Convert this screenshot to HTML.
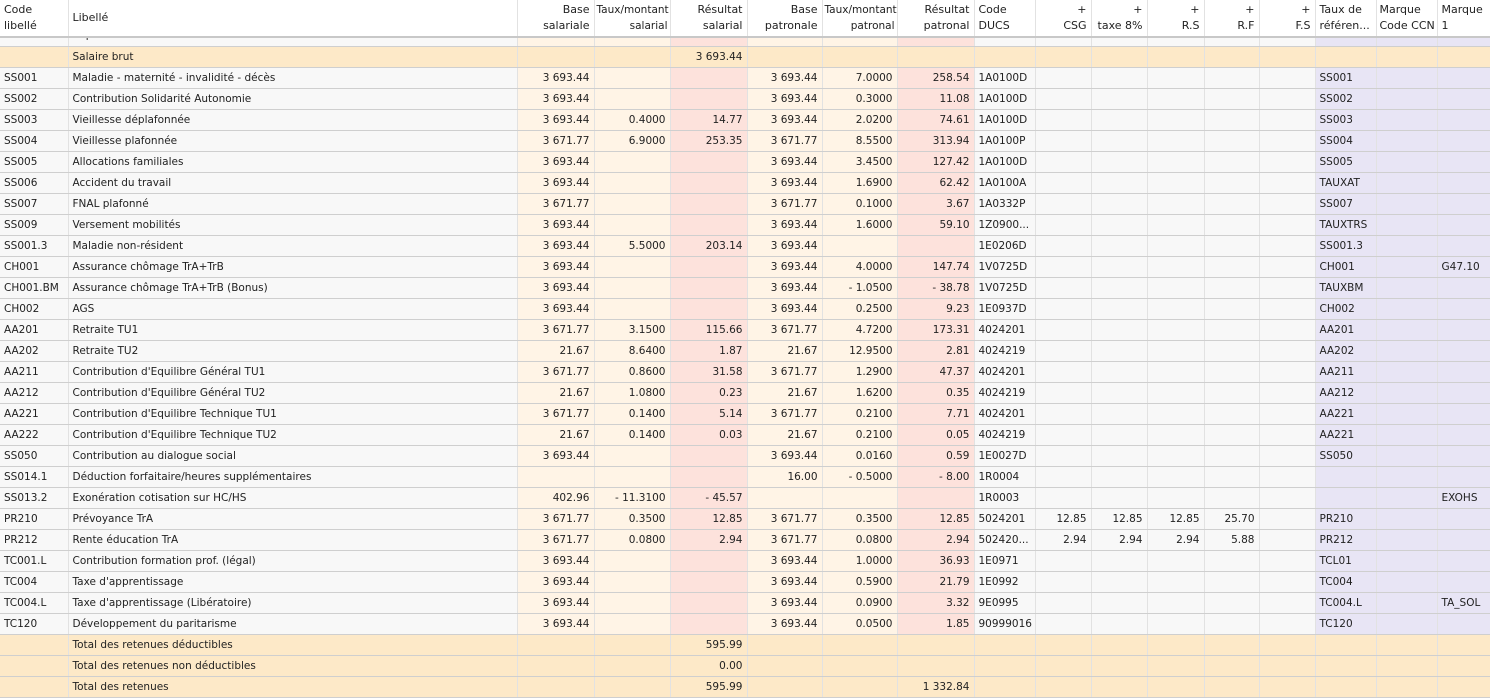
<!DOCTYPE html>
<html><head><meta charset="utf-8"><style>
*{margin:0;padding:0;box-sizing:border-box}
body{width:1490px;height:691px;overflow:hidden;background:#fff;font-family:"DejaVu Sans","Liberation Sans",sans-serif;font-size:10.5px;color:#222;position:relative}
table{border-collapse:collapse;table-layout:fixed;width:1490px;position:absolute;left:0}
td{height:21px;border-bottom:1px solid #cfcfcf;border-right:1px solid #e2e2e2;padding:0 4px;white-space:nowrap;overflow:hidden;background:#f8f8f8}
td.r{text-align:right}
.o{background:#fff4e6}.p{background:#fde2dc}.l{background:#e8e5f5}
tr.t td{background:#fde9c8}
#hd{top:0;z-index:2;background:#fff}
#hd td{height:37px;max-height:37px;background:#fff;border-bottom:2px solid #c8c8c8;vertical-align:middle;line-height:16px;white-space:nowrap;font-size:11px}
#bd{top:25px}
</style></head><body>
<table id="hd"><colgroup><col style="width:68px"><col style="width:449px"><col style="width:77px"><col style="width:76px"><col style="width:77px"><col style="width:75px"><col style="width:75px"><col style="width:77px"><col style="width:61px"><col style="width:56px"><col style="width:56px"><col style="width:57px"><col style="width:55px"><col style="width:56px"><col style="width:61px"><col style="width:61px"><col style="width:53px"></colgroup>
<tr><td>Code<br>libellé</td><td>Libellé</td><td class="r">Base<br>salariale</td><td class="r" style="padding:0 2px;font-size:10.5px">Taux/montant<br>salarial</td><td class="r">Résultat<br>salarial</td><td class="r">Base<br>patronale</td><td class="r" style="padding:0 2px;font-size:10.5px">Taux/montant<br>patronal</td><td class="r">Résultat<br>patronal</td><td>Code<br>DUCS</td><td class="r">+<br>CSG</td><td class="r">+<br>taxe 8%</td><td class="r">+<br>R.S</td><td class="r">+<br>R.F</td><td class="r">+<br>F.S</td><td>Taux de<br>référen...</td><td style="padding:0 3px">Marque<br>Code CCN</td><td>Marque<br>1</td></tr></table>
<table id="bd"><colgroup><col style="width:68px"><col style="width:449px"><col style="width:77px"><col style="width:76px"><col style="width:77px"><col style="width:75px"><col style="width:75px"><col style="width:77px"><col style="width:61px"><col style="width:56px"><col style="width:56px"><col style="width:57px"><col style="width:55px"><col style="width:56px"><col style="width:61px"><col style="width:61px"><col style="width:53px"></colgroup>
<tbody id="tb"></tbody></table>
<script>
var R=[
["A01","Repas TR","20.00","4.2200","84.40","","","","","","","","","","","",""],
["T","Salaire brut","","","3 693.44"],
["SS001","Maladie - maternité - invalidité - décès","3 693.44","","","3 693.44","7.0000","258.54","1A0100D","","","","","","SS001","",""],
["SS002","Contribution Solidarité Autonomie","3 693.44","","","3 693.44","0.3000","11.08","1A0100D","","","","","","SS002","",""],
["SS003","Vieillesse déplafonnée","3 693.44","0.4000","14.77","3 693.44","2.0200","74.61","1A0100D","","","","","","SS003","",""],
["SS004","Vieillesse plafonnée","3 671.77","6.9000","253.35","3 671.77","8.5500","313.94","1A0100P","","","","","","SS004","",""],
["SS005","Allocations familiales","3 693.44","","","3 693.44","3.4500","127.42","1A0100D","","","","","","SS005","",""],
["SS006","Accident du travail","3 693.44","","","3 693.44","1.6900","62.42","1A0100A","","","","","","TAUXAT","",""],
["SS007","FNAL plafonné","3 671.77","","","3 671.77","0.1000","3.67","1A0332P","","","","","","SS007","",""],
["SS009","Versement mobilités","3 693.44","","","3 693.44","1.6000","59.10","1Z0900...","","","","","","TAUXTRS","",""],
["SS001.3","Maladie non-résident","3 693.44","5.5000","203.14","3 693.44","","","1E0206D","","","","","","SS001.3","",""],
["CH001","Assurance chômage TrA+TrB","3 693.44","","","3 693.44","4.0000","147.74","1V0725D","","","","","","CH001","","G47.10"],
["CH001.BM","Assurance chômage TrA+TrB (Bonus)","3 693.44","","","3 693.44","- 1.0500","- 38.78","1V0725D","","","","","","TAUXBM","",""],
["CH002","AGS","3 693.44","","","3 693.44","0.2500","9.23","1E0937D","","","","","","CH002","",""],
["AA201","Retraite TU1","3 671.77","3.1500","115.66","3 671.77","4.7200","173.31","4024201","","","","","","AA201","",""],
["AA202","Retraite TU2","21.67","8.6400","1.87","21.67","12.9500","2.81","4024219","","","","","","AA202","",""],
["AA211","Contribution d'Equilibre Général TU1","3 671.77","0.8600","31.58","3 671.77","1.2900","47.37","4024201","","","","","","AA211","",""],
["AA212","Contribution d'Equilibre Général TU2","21.67","1.0800","0.23","21.67","1.6200","0.35","4024219","","","","","","AA212","",""],
["AA221","Contribution d'Equilibre Technique TU1","3 671.77","0.1400","5.14","3 671.77","0.2100","7.71","4024201","","","","","","AA221","",""],
["AA222","Contribution d'Equilibre Technique TU2","21.67","0.1400","0.03","21.67","0.2100","0.05","4024219","","","","","","AA221","",""],
["SS050","Contribution au dialogue social","3 693.44","","","3 693.44","0.0160","0.59","1E0027D","","","","","","SS050","",""],
["SS014.1","Déduction forfaitaire/heures supplémentaires","","","","16.00","- 0.5000","- 8.00","1R0004","","","","","","","",""],
["SS013.2","Exonération cotisation sur HC/HS","402.96","- 11.3100","- 45.57","","","","1R0003","","","","","","","","EXOHS"],
["PR210","Prévoyance TrA","3 671.77","0.3500","12.85","3 671.77","0.3500","12.85","5024201","12.85","12.85","12.85","25.70","","PR210","",""],
["PR212","Rente éducation TrA","3 671.77","0.0800","2.94","3 671.77","0.0800","2.94","502420...","2.94","2.94","2.94","5.88","","PR212","",""],
["TC001.L","Contribution formation prof. (légal)","3 693.44","","","3 693.44","1.0000","36.93","1E0971","","","","","","TCL01","",""],
["TC004","Taxe d'apprentissage","3 693.44","","","3 693.44","0.5900","21.79","1E0992","","","","","","TC004","",""],
["TC004.L","Taxe d'apprentissage (Libératoire)","3 693.44","","","3 693.44","0.0900","3.32","9E0995","","","","","","TC004.L","","TA_SOL"],
["TC120","Développement du paritarisme","3 693.44","","","3 693.44","0.0500","1.85","90999016","","","","","","TC120","",""],
["T","Total des retenues déductibles","","","595.99"],
["T","Total des retenues non déductibles","","","0.00"],
["T","Total des retenues","","","595.99","","","1 332.84"]
];
var cls=["","","o r","o r","p r","o r","o r","p r","","r","r","r","r","r","l","l","l"];
var h="";
R.forEach(function(r){
 var t=r[0]=="T";h+=t?'<tr class="t">':'<tr>';
 for(var i=0;i<17;i++){var v=r[i]||"";if(t&&i==0)v="";h+='<td class="'+cls[i]+'">'+v+'</td>';}
 h+='</tr>';});
document.getElementById("tb").innerHTML=h;
</script>
</body></html>
